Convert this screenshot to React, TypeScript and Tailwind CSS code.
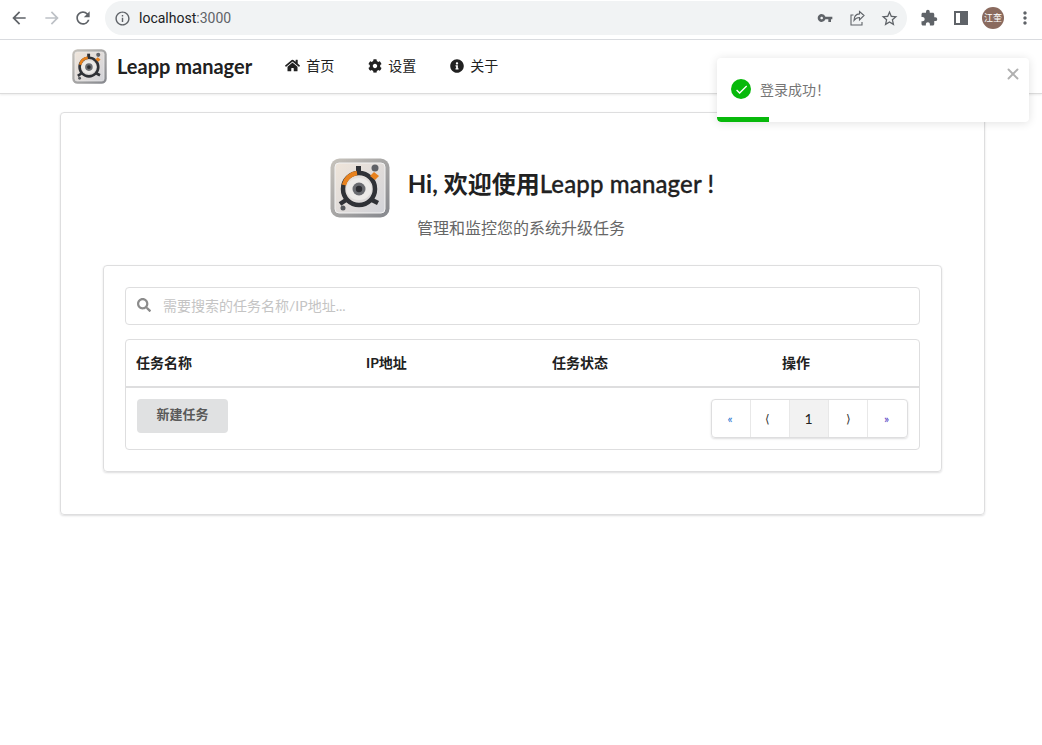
import React from 'react';
import { FaHome, FaCog, FaInfoCircle, FaSearch } from 'react-icons/fa';
import { MdArrowBack, MdArrowForward, MdRefresh, MdInfoOutline, MdVpnKey, MdStarBorder, MdExtension, MdMoreVert, MdCheck } from 'react-icons/md';
import { X } from 'lucide-react';

const CJK = "font-['Lato','Noto_Sans_CJK_SC',sans-serif]";

// Leapp logo, drawn by hand
const Logo = ({ size, id }: { size: number; id: string }) => (
    <svg width={size} height={size} viewBox="0 0 60 60" className="shrink-0">
        <defs>
            <linearGradient id={`${id}-frame`} x1="0" y1="0" x2="1" y2="1">
                <stop offset="0" stopColor="#c8c4bd" />
                <stop offset="1" stopColor="#85878d" />
            </linearGradient>
            <linearGradient id={`${id}-plate`} x1="0" y1="0" x2="1" y2="1">
                <stop offset="0" stopColor="#efe5da" />
                <stop offset="1" stopColor="#d2d3d9" />
            </linearGradient>
        </defs>
        <rect x="0.5" y="0.5" width="59" height="59" rx="9" fill={`url(#${id}-frame)`} />
        <rect x="5" y="5" width="50" height="50" rx="4" fill={`url(#${id}-plate)`} stroke="#f2f2f2" strokeWidth="1" />
        <circle cx="45" cy="10" r="3.500" fill="#5f6166" />
        <circle cx="13" cy="50" r="2.500" fill="#55585c" />
        <path d="M26 8h5v9h-5z" fill="#2f3136" />
        <circle cx="29" cy="31" r="16" fill="none" stroke="#2f3136" strokeWidth="4.500" />
        <path d="M14 27a15.500 15.500 0 0 1 13-12" fill="none" stroke="#e8821e" strokeWidth="4.500" />
        <path d="M40 18l4-4 5 4-4 4z" fill="#e8821e" />
        <path d="M16 42l-6 4M42 42l6 3" stroke="#2f3136" strokeWidth="4.500" />
        <ellipse cx="29" cy="31" rx="12.500" ry="11" fill="#eceae8" />
        <circle cx="29" cy="31" r="6.500" fill="#6a6c71" />
        <circle cx="29" cy="31" r="3.200" fill="#2d2e33" />
    </svg>
);

const ChromeBar = () => (
    <div className="flex h-10 items-center border-b border-[#dadce0] bg-white pb-[3px]">
        <MdArrowBack className="ml-[9px] text-[#5f6368]" size={20} />
        <MdArrowForward className="ml-[13px] text-[#bdc1c6]" size={20} />
        <MdRefresh className="ml-[11px] text-[#5f6368]" size={20} />
        <div className="ml-[12px] flex h-[34px] w-[802px] items-center rounded-full bg-[#f1f3f4]">
            <MdInfoOutline className="ml-[9px] text-[#5f6368]" size={17} />
            <span className="ml-[8px] font-['Roboto',sans-serif] text-[14px] text-[#202124]">
                localhost<span className="text-[#5f6368]">:3000</span>
            </span>
            <div className="ml-auto flex items-center">
                <MdVpnKey className="text-[#5f6368]" size={16} />
                <svg width="18" height="18" viewBox="0 0 18 18" fill="none" stroke="#5f6368" strokeWidth="1.1" className="ml-[16px]">
                    <path d="M15 6.500 10.500 2.500v2.400C6.500 5.200 5 8 5 11.500c1.300-2 3-3 5.500-3v2.400z" />
                    <path d="M4.500 6H2v10h11v-3" />
                </svg>
                <MdStarBorder className="ml-[13px] mr-[8px] text-[#5f6368]" size={19} />
            </div>
        </div>
        <MdExtension className="ml-[13px] text-[#5f6368]" size={18} />
        <div className="ml-[16px] flex h-[14px] w-[14px] justify-end border-2 border-[#5f6368]">
            <div className="h-full w-[6px] bg-[#5f6368]" />
        </div>
        <div className={`ml-[14px] flex h-[22px] w-[22px] items-center justify-center rounded-full bg-[#8a6a5e] text-[9px] text-white ${CJK}`}>江奎</div>
        <MdMoreVert className="ml-[11px] text-[#5f6368]" size={20} />
    </div>
);

const NavItem = ({ icon, label }: { icon: React.ReactNode; label: string }) => (
    <div className="flex items-center gap-[6px] text-[14px] text-[#212121]">
        {icon}
        <span>{label}</span>
    </div>
);

const Toast = () => (
    <div className="absolute left-[717px] top-[58px] h-[64px] w-[312px] overflow-hidden rounded-[4px] bg-white shadow-[0_1px_10px_rgba(0,0,0,0.12)]">
        <div className="flex h-full items-center pb-[1px] pl-[14px]">
            <div className="-mt-[1px] flex h-5 w-5 items-center justify-center rounded-full bg-[#07b90b] text-white">
                <MdCheck size={15} />
            </div>
            <span className="ml-[9px] text-[14px] text-[#757575]">登录成功！</span>
        </div>
        <X className="absolute right-[7px] top-[7px] text-[#b0b0b0]" size={18} strokeWidth={2.5} />
        <div className="absolute bottom-0 left-0 h-[5px] w-[52px] rounded-bl-[4px] bg-[#07b90b]" />
    </div>
);

const pageCells = [
    { label: '«', cls: 'pr-[2px] text-[12px] text-[#1a6fd0]' },
    { label: '⟨', cls: 'pr-[5px] text-[12px] text-[#333]' },
    { label: '1', cls: 'pr-[1px] bg-[#f2f2f2] text-[14px] text-[#222]' },
    { label: '⟩', cls: 'pl-[1px] text-[12px] text-[#333]' },
    { label: '»', cls: 'pr-[2px] text-[12px] text-[#4a30c0]' },
];

export default function App() {
    return (
        <div className={`relative min-h-[745px] bg-white ${CJK}`}>
            <ChromeBar />

            <div className="flex h-[54px] items-center border-b border-[#dcdcdc] pl-[72px] shadow-[0_1px_2px_rgba(0,0,0,0.08)]">
                <Logo size={35} id="nav" />
                <span className="mb-[2px] ml-[10px] text-[20px] font-bold text-[#212121]">Leapp manager</span>
                <div className="mb-[2px] ml-[33px] flex items-center gap-[34px]">
                    <NavItem icon={<FaHome size={15} />} label="首页" />
                    <NavItem icon={<FaCog size={14} />} label="设置" />
                    <NavItem icon={<FaInfoCircle size={14} />} label="关于" />
                </div>
            </div>

            <Toast />

            <div className="ml-[60px] mt-[18px] w-[925px] rounded-[4px] border border-[#dededf] px-[42px] pb-[42px] pt-[45px] shadow-[0_1px_2px_rgba(34,36,38,0.15)]">
                <div className="flex items-center justify-center pr-[1px]">
                    <Logo size={60} id="hero" />
                    <span className="mb-[8px] ml-[18px] whitespace-pre text-[24px] font-bold text-[#212121]">Hi, 欢迎使用<span className="font-medium tracking-[0.14px] [-webkit-text-stroke:0.3px_#212121]">Leapp manager !</span></span>
                </div>
                <p className="-mt-[1px] pl-[314px] text-[16px] leading-[22px] text-[#666]">管理和监控您的系统升级任务</p>

                <div className="mt-[26px] rounded-[4px] border border-[#dededf] p-[21px] shadow-[0_1px_2px_rgba(34,36,38,0.15)]">
                    <div className="flex h-[38px] items-center rounded-[4px] border border-[#dededf] pb-[2px] pl-[11px]">
                        <FaSearch className="text-[#8c8c8c]" size={14} />
                        <span className="ml-[12px] text-[14px] text-[#c4c4c4]">需要搜索的任务名称/IP地址...</span>
                    </div>

                    <div className="mt-[14px] rounded-[4px] border border-[#dededf]">
                        <div className="grid h-[48px] grid-cols-[230px_186px_230px_1fr] items-center border-b-2 border-[#dededf] pb-[1px] pl-[10px] text-[14px] font-bold text-[#212121]">
                            <span>任务名称</span>
                            <span>IP地址</span>
                            <span>任务状态</span>
                            <span>操作</span>
                        </div>
                        <div className="flex h-[61px] items-start justify-between px-[11px] pt-[11px]">
                            <button className="h-[34px] w-[91px] rounded-[4px] bg-[#e0e1e2] pb-[2px] text-[13px] font-bold text-[#5a5a5a]">新建任务</button>
                            <div className="flex h-[39px] overflow-hidden rounded-[4px] border border-[#dededf] shadow-[0_1px_2px_rgba(34,36,38,0.15)]">
                                {pageCells.map((c, i) => (
                                    <div key={i} className={`flex w-[39px] items-center justify-center border-r border-[#e8e8e8] last:border-r-0 ${c.cls}`}>
                                        {c.label}
                                    </div>
                                ))}
                            </div>
                        </div>
                    </div>
                </div>
            </div>
        </div>
    );
}
